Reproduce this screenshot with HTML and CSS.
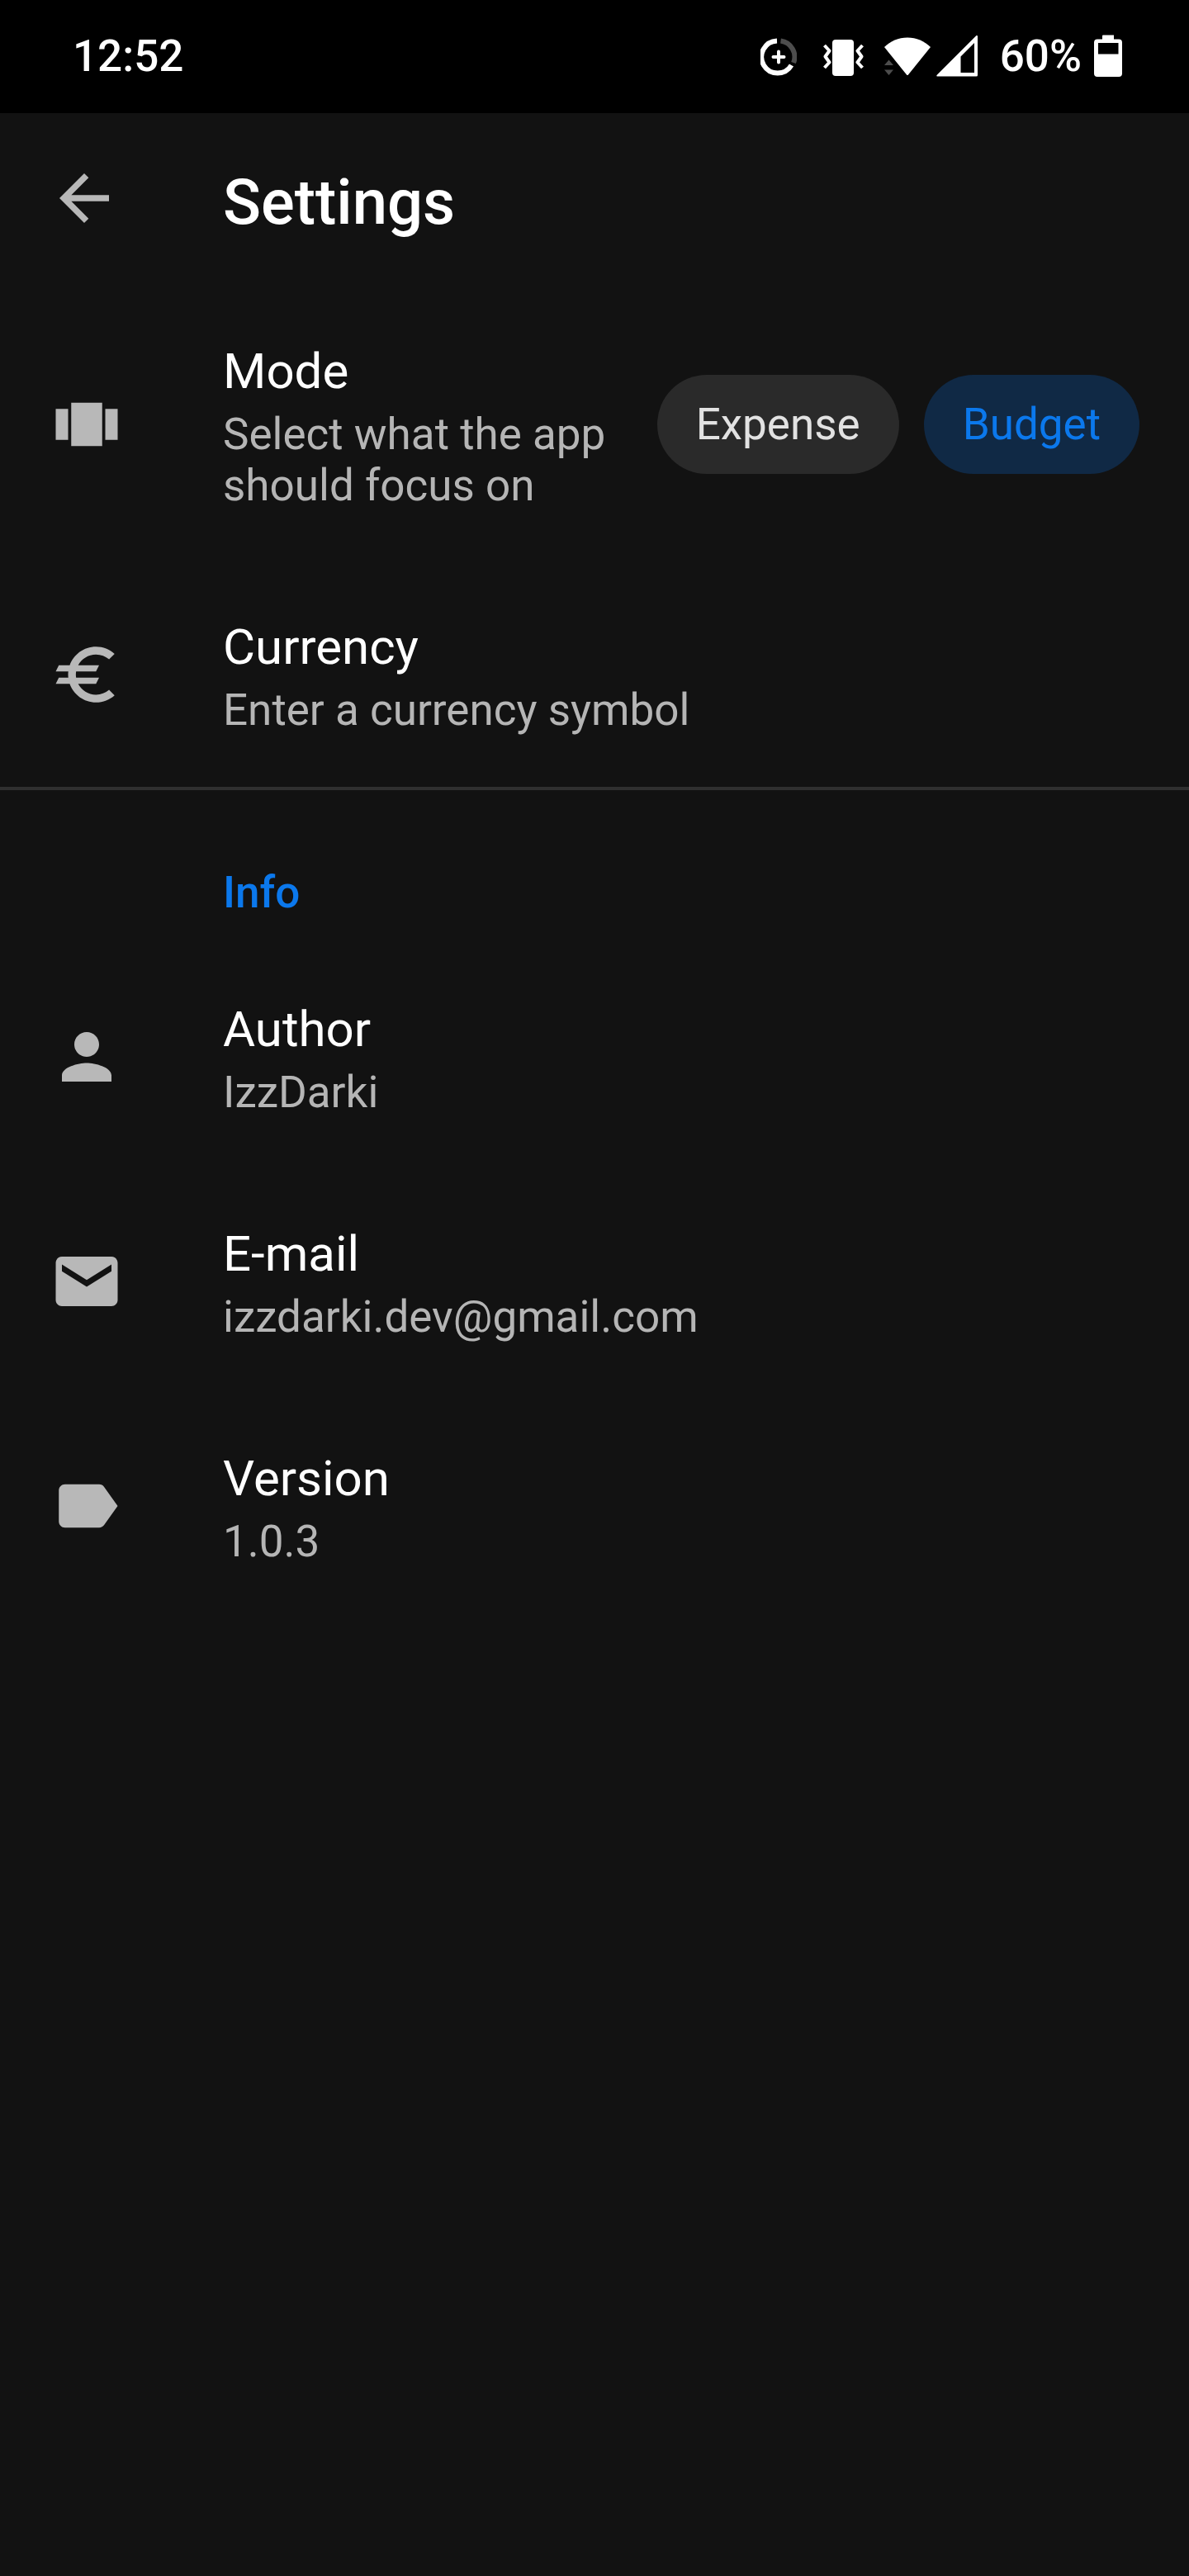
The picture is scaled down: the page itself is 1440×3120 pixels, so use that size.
FILE: index.html
```html
<!DOCTYPE html>
<html lang="en">
<head>
<meta charset="utf-8">
<meta name="viewport" content="width=device-width, initial-scale=1">
<title>Settings</title>
<link rel="stylesheet" href="styles.css">
</head>
<body>
<div class="status-bar">
  <span class="clock">12:52</span>
  <div class="status-icons">
    <svg class="status-icon" width="44" height="52" viewBox="0 0 44 52" aria-hidden="true">
      <g fill="none" stroke="#fff" stroke-width="6">
        <path d="M20 7.500A19.500 19.500 0 1 0 37.500 37"/>
        <path stroke="#4d4d4d" d="M24.500 7.500A19.500 19.500 0 0 1 40 34"/>
        <path stroke-width="4" stroke-linecap="round" d="M22 20.500v13M15.500 27h13"/>
      </g>
    </svg>
    <svg class="status-icon vibrate" width="50" height="52" viewBox="0 0 50 52" aria-hidden="true">
      <rect x="11" y="6" width="26" height="44" rx="4" fill="#fff"/>
      <path fill="none" stroke="#fff" stroke-width="4" stroke-linejoin="round" d="M1.500 13l6 6.500-5 7 5 7-6 6.500M47.500 13l-6 6.500 5 7-5 7 6 6.500"/>
    </svg>
    <svg class="status-icon wifi" width="56" height="52" viewBox="0 0 56 52" aria-hidden="true">
      <path fill="#fff" d="M28 3.500c11 0 20.500 4.300 28 11.500L29 48.500q-1 1-2 0L0 15C7.500 7.800 17 3.500 28 3.500z"/>
      <path fill="#4d4d4d" d="M0 37l5.500-6.500L11 37zM0 42.500h11L5.500 49z"/>
    </svg>
    <svg class="status-icon signal" width="50" height="52" viewBox="0 0 50 52" aria-hidden="true">
      <path fill="#fff" fill-rule="evenodd" d="M48.500 1q1.500-.5 1.500 1v47q0 1.500-1.500 1.500H1q-1.500-.5 0-2zM46 10L29.500 26.500V46H46z"/>
    </svg>
    <span class="battery-level">60%</span>
    <svg class="status-icon" width="34" height="52" viewBox="0 0 34 52" aria-hidden="true">
      <path fill="#fff" fill-rule="evenodd" d="M11 .5h13v5h6q4 0 4 4V47q0 4-4 4H4q-4 0-4-4V9.500q0-4 4-4h6v-4q0-1 1-1zM5 10v13.500h24.500V10z"/>
    </svg>
  </div>
</div>

<header class="app-bar">
  <button class="back" type="button" aria-label="Back">
    <svg class="icon" viewBox="0 0 24 24" aria-hidden="true"><path d="M20 11H7.830l5.590-5.590L12 4l-8 8 8 8 1.410-1.410L7.830 13H20v-2z"/></svg>
  </button>
  <h1 class="app-title">Settings</h1>
</header>

<main>
  <section class="general">
    <div class="row">
      <svg class="icon" viewBox="0 0 24 24" aria-hidden="true"><path d="M2 7h4v10H2V7zm5 12h10V5H7v14zM18 7h4v10h-4V7z"/></svg>
      <div class="row-text">
        <div class="row-title">Mode</div>
        <div class="row-summary">Select what the app should focus on</div>
      </div>
      <div class="chips" role="group" aria-label="Mode">
        <button class="chip" type="button" aria-pressed="false">Expense</button>
        <button class="chip chip-selected" type="button" aria-pressed="true">Budget</button>
      </div>
    </div>
    <div class="row">
      <svg class="icon" viewBox="0 0 24 24" aria-hidden="true"><path d="M15 18.500c-2.510 0-4.680-1.420-5.760-3.500H15l1-2H8.580c-.05-.33-.08-.66-.08-1s.03-.67.08-1H15l1-2H9.240C10.320 6.920 12.500 5.500 15 5.500c1.610 0 3.090.59 4.230 1.570L21 5.300C19.410 3.870 17.300 3 15 3c-3.920 0-7.240 2.510-8.480 6H3l-1 2h4.060c-.04.33-.06.66-.06 1s.02.67.06 1H3l-1 2h4.520c1.240 3.490 4.560 6 8.480 6 2.310 0 4.410-.87 6-2.300l-1.780-1.770c-1.130.98-2.600 1.570-4.220 1.570z"/></svg>
      <div class="row-text">
        <div class="row-title">Currency</div>
        <div class="row-summary">Enter a currency symbol</div>
      </div>
    </div>
  </section>

  <section class="info">
    <h2 class="section-title">Info</h2>
    <div class="row">
      <svg class="icon" viewBox="0 0 24 24" aria-hidden="true"><path d="M12 12c2.210 0 4-1.790 4-4s-1.790-4-4-4-4 1.790-4 4 1.790 4 4 4zm0 2c-2.670 0-8 1.340-8 4v2h16v-2c0-2.660-5.330-4-8-4z"/></svg>
      <div class="row-text">
        <div class="row-title">Author</div>
        <div class="row-summary">IzzDarki</div>
      </div>
    </div>
    <div class="row">
      <svg class="icon" viewBox="0 0 24 24" aria-hidden="true"><path d="M20 4H4c-1.100 0-1.990.9-1.990 2L2 18c0 1.100.9 2 2 2h16c1.100 0 2-.9 2-2V6c0-1.100-.9-2-2-2zm0 4.700l-8 5-8-5V6.500l8 5 8-5v2.200z"/></svg>
      <div class="row-text">
        <div class="row-title">E-mail</div>
        <div class="row-summary">izzdarki.dev@gmail.com</div>
      </div>
    </div>
    <div class="row">
      <svg class="icon" viewBox="0 0 24 24" aria-hidden="true"><path d="M17.630 5.840C17.270 5.330 16.670 5 16 5L5 5.010C3.900 5.010 3 5.900 3 7v10c0 1.100.9 1.990 2 1.990L16 19c.67 0 1.270-.33 1.630-.84L22 12l-4.370-6.160z"/></svg>
      <div class="row-text">
        <div class="row-title">Version</div>
        <div class="row-summary">1.0.3</div>
      </div>
    </div>
  </section>
</main>
</body>
</html>
```

FILE: styles.css
```css
* {
  box-sizing: border-box;
}

body {
  margin: 0;
  min-height: 100vh;
  background: #121212;
  color: #fff;
  font-family: Roboto, "Liberation Sans", sans-serif;
  font-size: 53px;
  line-height: 62px;
}

.status-bar {
  display: flex;
  justify-content: space-between;
  align-items: center;
  padding: 37px 81px 38px 88px;
  background: #000;
  font-weight: 500;
}

.status-icons {
  display: flex;
  align-items: center;
}

.status-icon {
  display: block;
  flex: none;
}

.vibrate {
  margin: 0 24px 0 32px;
}

.signal {
  margin: 0 27px 0 7px;
}

.battery-level {
  margin-right: 15px;
}

.app-bar {
  display: flex;
  align-items: flex-start;
  padding: 58px 60px 52px 57px;
}

.back {
  margin: 0 123px 0 0;
  padding: 0;
  border: 0;
  background: none;
}

.app-title {
  margin: 0;
  font-size: 76px;
  font-weight: 500;
  line-height: 100px;
}

.icon {
  display: block;
  flex: none;
  width: 90px;
  height: 90px;
  fill: #b8b8b8;
}

.general {
  border-bottom: 4px solid #2f2f2f;
}

.row {
  display: flex;
  align-items: center;
  padding: 0 60px;
}

.row-text {
  flex: 1;
  margin-left: 120px;
  padding: 68px 0 62px;
}

.row-title {
  margin-bottom: 10px;
  font-size: 60px;
  line-height: 70px;
}

.row-summary {
  color: #b5b5b5;
}

.chips {
  display: flex;
  flex: none;
  gap: 30px;
  margin-left: 45px;
}

.chip {
  height: 120px;
  padding: 0 47px;
  border: 0;
  border-radius: 60px;
  background: #2a2a2a;
  color: #e2e2e2;
  font: inherit;
}

.chip-selected {
  background: #102945;
  color: #0b78ec;
}

.section-title {
  margin: 0;
  padding: 93px 60px 32px 270px;
  color: #0b78ec;
  font-size: 53px;
  font-weight: 500;
}
```
